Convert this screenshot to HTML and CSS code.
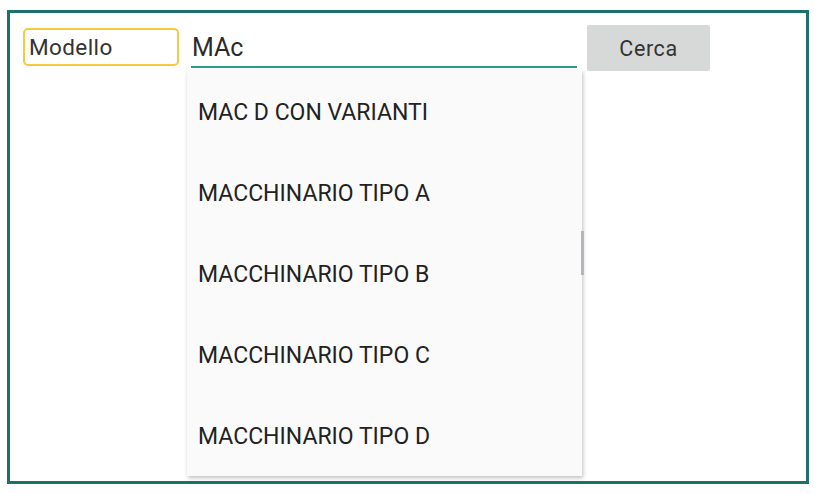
FILE: index.html
```html
<!DOCTYPE html>
<html>
    <head>
        <title>Ricerca modello</title>
        <link rel="stylesheet" href="styles.css">
    </head>
    <body>
        <div class="frame">
            <div class="toolbar">
                <div class="field-label">Modello</div>
                <div class="search">MAc</div>
                <button class="search-button">Cerca</button>
            </div>

            <!-- Suggestions list -->
            <div class="dropdown">
                <ul class="suggestions">
                    <li>MAC D CON VARIANTI</li>
                    <li>MACCHINARIO TIPO A</li>
                    <li>MACCHINARIO TIPO B</li>
                    <li>MACCHINARIO TIPO C</li>
                    <li>MACCHINARIO TIPO D</li>
                </ul>
                <div class="scroll-thumb"></div>
            </div>
        </div>
    </body>
</html>
```

FILE: styles.css
```css
body {
    margin: 0; /* Remove default margin */
    background: white;
    font-family: Roboto, "Liberation Sans", sans-serif;
    color: #2b2b2b;
}

.frame {
    position: relative;
    box-sizing: border-box;
    width: 802px;
    height: 474px;
    margin: 10px 0 0 7px;
    border: 3px solid #1d716c; /* Dark teal frame */
}

.toolbar {
    display: flex;
    align-items: flex-start;
    padding: 12px 0 0 13px;
}

    .field-label {
        box-sizing: border-box;
        width: 156px;
        height: 38px;
        margin-top: 3px;
        padding-left: 4px;
        border: 2px solid #f8c93e; /* Yellow focus border */
        border-radius: 5px;
        font-size: 22.5px;
        letter-spacing: 0.4px;
        line-height: 34px;
        color: #333;
    }

    .search {
        box-sizing: border-box;
        width: 386px;
        height: 43px;
        margin-left: 12px;
        padding: 8px 0 0 1px;
        border-bottom: 2px solid #2b9a8c; /* Teal underline */
        font-size: 25px;
        line-height: 30px;
    }

    .search-button {
        width: 123px;
        height: 46px;
        margin-left: 10px;
        padding: 0;
        background: #d7d8d8;
        border: none;
        border-radius: 2px;
        font-family: Roboto, "Liberation Sans", sans-serif;
        font-size: 21.5px;
        letter-spacing: 0.6px;
        color: #333;
    }

/* Dropdown with the suggestions */
.dropdown {
    position: absolute;
    left: 177px;
    top: 57px;
    width: 395px;
    height: 406px;
    background: #fafafa;
    box-shadow: 1px 2px 4px rgba(0, 0, 0, 0.25);
}

    .suggestions {
        list-style: none;
        margin: 0;
        padding: 2px 0 0 0;
    }

    .suggestions li {
        height: 81px;
        padding-left: 11px;
        font-size: 23px;
        line-height: 81px;
        color: #222;
    }

    .scroll-thumb {
        position: absolute;
        right: -2px;
        top: 161px;
        width: 3px;
        height: 44px;
        background: #b3b7bb;
    }
```
